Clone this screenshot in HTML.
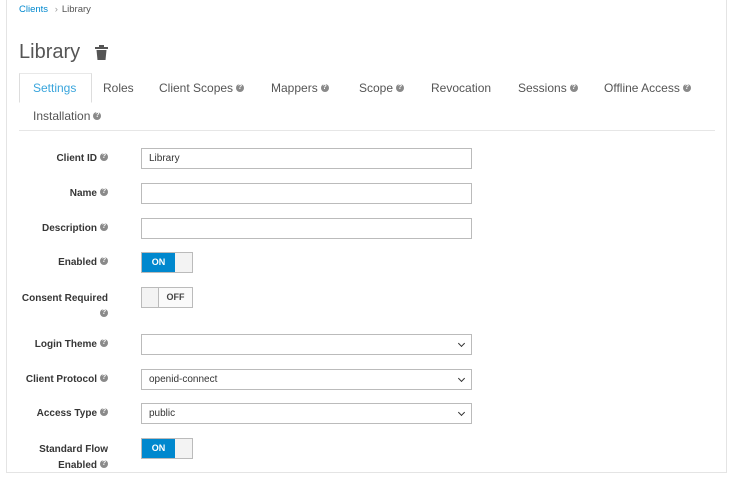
<!DOCTYPE html><html><head><style>
body{margin:0;width:731px;height:477px;background:#fff;font-family:"Liberation Sans",sans-serif;position:relative;overflow:hidden}
.a{position:absolute}
.box{left:6px;top:-1px;width:719px;height:472px;border:1px solid #e4e4e4}
.q{display:inline-block;width:8px;height:8px;border-radius:50%;background:#8a8a8a;color:#fff;font-size:7px;line-height:8px;text-align:center;font-weight:bold;vertical-align:middle;position:relative;top:-1px;margin-left:3px}
.tab{font-size:12px;color:#555;top:81px}
.lbl{font-size:10px;font-weight:bold;color:#363636;text-align:right;width:100px;left:8px}
.in{position:absolute;left:141px;border:1px solid #bbb;font-size:10px;color:#333;line-height:19px;padding-left:7px;box-sizing:border-box;width:331px;height:21px}
.sel::after{content:"";position:absolute;right:7px;top:6px;width:4px;height:4px;border-right:1.5px solid #333;border-bottom:1.5px solid #333;transform:rotate(45deg)}
.tg{left:141px;width:52px;height:21px;border:1px solid #bbb;box-sizing:border-box;background:#f3f3f3;font-size:9px;font-weight:bold}
.on{position:absolute;left:0;top:0;width:33px;height:19px;background:#0088ce;color:#fff;line-height:19px;text-align:center}
.off{position:absolute;right:0;top:0;width:33px;height:19px;border-left:1px solid #bbb;background:#fafafa;color:#444;line-height:19px;text-align:center}
</style></head><body>
<div class="a box"></div>
<div class="a" style="left:19px;top:4px;font-size:9.5px;color:#0088ce">Clients <span style="color:#999;margin:0 4px">›</span><span style="color:#555">Library</span></div>
<div class="a" style="left:19px;top:41px;font-size:20px;color:#555">Library</div>
<svg class="a" style="left:95px;top:45px" width="13" height="15" viewBox="0 0 13 15"><rect x="0" y="2" width="13" height="2" fill="#555"/><rect x="4" y="0" width="5" height="2" fill="#555"/><path d="M1.5 5h10l-1 10h-8z" fill="#555"/></svg>
<div class="a" style="left:19px;top:130px;width:696px;border-top:1px solid #e6e6e6"></div>
<div class="a" style="left:19px;top:73px;width:71px;height:28px;border:1px solid #ddd;border-bottom:1px solid #fff;border-top-color:#e8e8e8;background:#fff"></div>
<div class="a tab" style="left:33px;color:#39a5dc">Settings</div>
<div class="a tab" style="left:103px">Roles</div>
<div class="a tab" style="left:159px">Client Scopes<span class="q">?</span></div>
<div class="a tab" style="left:271px">Mappers<span class="q">?</span></div>
<div class="a tab" style="left:359px">Scope<span class="q">?</span></div>
<div class="a tab" style="left:431px">Revocation</div>
<div class="a tab" style="left:518px">Sessions<span class="q">?</span></div>
<div class="a tab" style="left:604px">Offline Access<span class="q">?</span></div>
<div class="a tab" style="left:33px;top:109px">Installation<span class="q">?</span></div>

<div class="a lbl" style="top:153px">Client ID<span class="q">?</span></div>
<div class="in" style="top:148px">Library</div>
<div class="a lbl" style="top:188px">Name<span class="q">?</span></div>
<div class="in" style="top:183px"></div>
<div class="a lbl" style="top:223px">Description<span class="q">?</span></div>
<div class="in" style="top:218px"></div>
<div class="a lbl" style="top:257px">Enabled<span class="q">?</span></div>
<div class="a tg" style="top:252px"><div class="on">ON</div></div>
<div class="a lbl" style="top:291px;line-height:16px">Consent Required<br><span class="q">?</span></div>
<div class="a tg" style="top:287px"><div class="off">OFF</div></div>
<div class="a lbl" style="top:339px">Login Theme<span class="q">?</span></div>
<div class="in sel" style="top:334px"></div>
<div class="a lbl" style="top:374px">Client Protocol<span class="q">?</span></div>
<div class="in sel" style="top:369px">openid-connect</div>
<div class="a lbl" style="top:408px">Access Type<span class="q">?</span></div>
<div class="in sel" style="top:403px">public</div>
<div class="a lbl" style="top:442px;line-height:16px">Standard Flow<br>Enabled<span class="q">?</span></div>
<div class="a tg" style="top:438px"><div class="on">ON</div></div>
</body></html>
